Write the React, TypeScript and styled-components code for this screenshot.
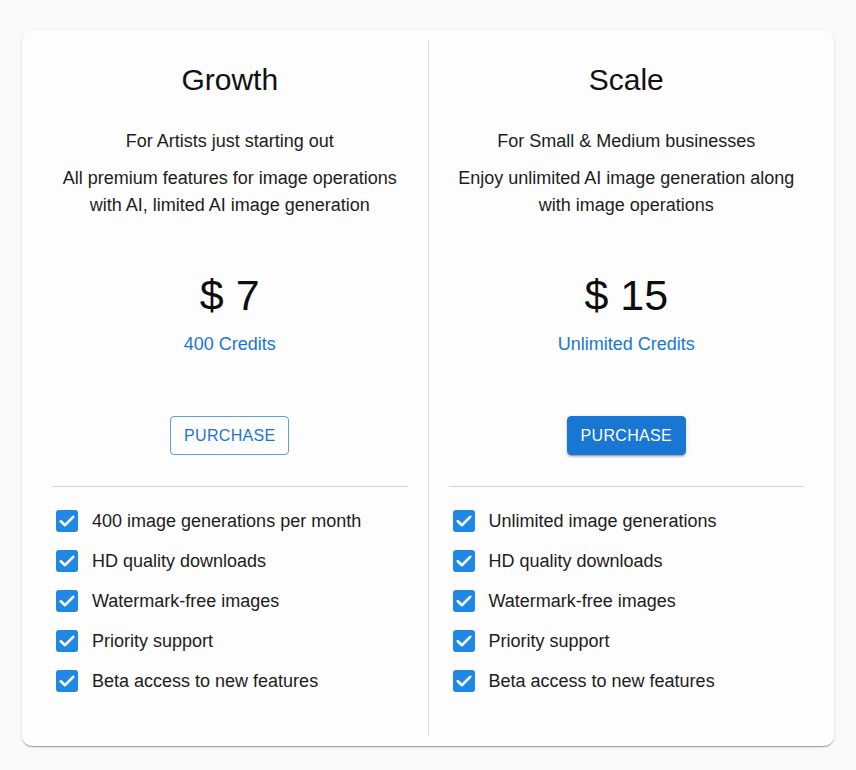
import React from 'react';
import styled, { createGlobalStyle } from 'styled-components';

const GlobalStyle = createGlobalStyle`
  body {
    margin: 0;
    background: #fafafa;
    font-family: 'Liberation Sans', Arial, sans-serif;
    color: #1c1c1c;
  }
`;

const Page = styled.div`
  padding: 30px 22px 24px 22px;
`;

const Card = styled.div`
  display: grid;
  grid-template-columns: 1fr 1px 1fr;
  padding: 10px;
  background: #fdfdfd;
  border-radius: 10px;
  box-shadow: 0 2px 1px -1px rgba(0, 0, 0, 0.2), 0 1px 1px 0 rgba(0, 0, 0, 0.14),
    0 1px 3px 0 rgba(0, 0, 0, 0.12);
`;

const VDivider = styled.div`
  background: #e2e2e2;
`;

const Column = styled.div`
  display: flex;
  flex-direction: column;
  align-items: center;
  padding: 22px 20px 35px;
`;

const PlanName = styled.h2`
  margin: 0;
  font-size: 30px;
  line-height: 36px;
  font-weight: 400;
  color: #111;
`;

const Audience = styled.p`
  margin: 30px 0 0;
  font-size: 18px;
  line-height: 27px;
  text-align: center;
`;

const Description = styled.p`
  margin: 10px 0 0;
  font-size: 18px;
  line-height: 27px;
  text-align: center;
`;

const Price = styled.div`
  margin-top: 51px;
  font-size: 43px;
  line-height: 50px;
  color: #0d0d0d;
`;

const Credits = styled.div`
  margin-top: 11px;
  font-size: 18px;
  line-height: 27px;
  color: #1976d2;
`;

const PurchaseButton = styled.button<{ $filled?: boolean }>`
  margin-top: 58px;
  height: 39px;
  width: 119px;
  padding: 0;
  font-family: inherit;
  font-size: 16px;
  letter-spacing: 0.3px;
  text-transform: uppercase;
  border-radius: 4px;
  cursor: pointer;
  border: 1px solid ${({ $filled }) => ($filled ? '#1976d2' : 'rgba(25, 118, 210, 0.7)')};
  background: ${({ $filled }) => ($filled ? '#1976d2' : 'transparent')};
  color: ${({ $filled }) => ($filled ? '#fff' : '#1976d2')};
  box-shadow: ${({ $filled }) =>
    $filled
      ? '0 3px 1px -2px rgba(0,0,0,0.2), 0 2px 2px 0 rgba(0,0,0,0.14), 0 1px 5px 0 rgba(0,0,0,0.12)'
      : 'none'};
`;

const HDivider = styled.hr`
  align-self: stretch;
  margin: 31px 0 0;
  border: none;
  border-top: 1px solid #d6d6d6;
`;

const FeatureList = styled.ul`
  align-self: stretch;
  list-style: none;
  margin: 14px 0 0;
  padding: 0 0 0 4px;
`;

const Feature = styled.li`
  display: flex;
  align-items: center;
  gap: 14px;
  height: 40px;
  font-size: 18px;
`;

const CheckBox = () => (
  <svg width="22" height="22" viewBox="0 0 22 22">
    <rect x="0" y="0" width="22" height="22" rx="3" fill="#1f88e5" />
    <path
      d="M4.8 11.2 L9 15.2 L17.2 6.8"
      fill="none"
      stroke="#fff"
      strokeWidth="2.6"
      strokeLinecap="round"
      strokeLinejoin="round"
    />
  </svg>
);

const plans = [
  {
    name: 'Growth',
    audience: 'For Artists just starting out',
    description: ['All premium features for image operations', 'with AI, limited AI image generation'],
    price: '$ 7',
    credits: '400 Credits',
    filled: false,
    features: [
      '400 image generations per month',
      'HD quality downloads',
      'Watermark-free images',
      'Priority support',
      'Beta access to new features',
    ],
  },
  {
    name: 'Scale',
    audience: 'For Small & Medium businesses',
    description: ['Enjoy unlimited AI image generation along', 'with image operations'],
    price: '$ 15',
    credits: 'Unlimited Credits',
    filled: true,
    features: [
      'Unlimited image generations',
      'HD quality downloads',
      'Watermark-free images',
      'Priority support',
      'Beta access to new features',
    ],
  },
];

type Plan = (typeof plans)[number];

const PlanColumn: React.FC<{ plan: Plan }> = ({ plan }) => (
  <Column>
    <PlanName>{plan.name}</PlanName>
    <Audience>{plan.audience}</Audience>
    <Description>
      {plan.description[0]}
      <br />
      {plan.description[1]}
    </Description>
    <Price>{plan.price}</Price>
    <Credits>{plan.credits}</Credits>
    <PurchaseButton $filled={plan.filled}>Purchase</PurchaseButton>
    <HDivider />
    <FeatureList>
      {plan.features.map((f) => (
        <Feature key={f}>
          <CheckBox />
          {f}
        </Feature>
      ))}
    </FeatureList>
  </Column>
);

const App: React.FC = () => (
  <Page>
    <GlobalStyle />
    <Card>
      <PlanColumn plan={plans[0]} />
      <VDivider />
      <PlanColumn plan={plans[1]} />
    </Card>
  </Page>
);

export default App;
